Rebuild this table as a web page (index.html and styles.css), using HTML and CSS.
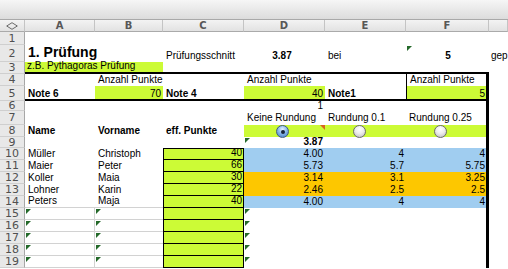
FILE: index.html
```html
<!DOCTYPE html>
<html>
<head>
<meta charset="utf-8">
<title>Prüfung</title>
<link rel="stylesheet" href="styles.css">
</head>
<body>
<div class="toolbar"></div>
<div class="sheet">
  <div class="corner"><svg width="12" height="8" viewBox="0 0 12 8"><polygon points="6,0.7 11.3,4 6,7.3 0.7,4" fill="none" stroke="#6a6a6a" stroke-width="1"/></svg></div>
  <div class="ch">A</div><div class="ch">B</div><div class="ch">C</div><div class="ch">D</div><div class="ch">E</div><div class="ch">F</div><div class="ch"></div>

  <div class="rh">1</div><div class="c"></div><div class="c"></div><div class="c"></div><div class="c"></div><div class="c"></div><div class="c"></div><div class="c"></div>

  <div class="rh">2</div>
  <div class="c span2 big">1. Prüfung</div>
  <div class="c">Prüfungsschnitt</div>
  <div class="c b m d2">3.87</div>
  <div class="c">bei</div>
  <div class="c b m gt">5</div>
  <div class="c g-col">gep</div>

  <div class="rh">3</div>
  <div class="c span2 g tb z">z.B. Pythagoras Prüfung</div>
  <div class="c tb"></div><div class="c tb"></div><div class="c tb"></div><div class="c tb"></div><div class="c"></div>

  <div class="rh">4</div>
  <div class="c"></div>
  <div class="c">Anzahl Punkte</div>
  <div class="c"></div>
  <div class="c">Anzahl Punkte</div>
  <div class="c"></div>
  <div class="c fl fr">Anzahl Punkte</div>
  <div class="c"></div>

  <div class="rh">5</div>
  <div class="c b tb p0">Note 6</div>
  <div class="c g r tb p0">70</div>
  <div class="c b tb p0">Note 4</div>
  <div class="c g r tb p0">40</div>
  <div class="c b tb p0">Note1</div>
  <div class="c g r tb fl fr p0 fpad">5</div>
  <div class="c"></div>

  <div class="rh">6</div>
  <div class="c"></div><div class="c"></div><div class="c"></div>
  <div class="c r p0">1</div>
  <div class="c"></div>
  <div class="c fr"></div>
  <div class="c"></div>

  <div class="rh">7</div>
  <div class="c"></div><div class="c"></div><div class="c"></div>
  <div class="c p2">Keine Rundung</div>
  <div class="c p2">Rundung 0.1</div>
  <div class="c fr p2">Rundung 0.25</div>
  <div class="c"></div>

  <div class="rh">8</div>
  <div class="c b">Name</div>
  <div class="c b">Vorname</div>
  <div class="c b">eff. Punkte</div>
  <div class="c g rad rad-d ct"><span class="radio on"></span></div>
  <div class="c g rad rad-e"><span class="radio"></span></div>
  <div class="c g rad rad-f fr"><span class="radio"></span></div>
  <div class="c"></div>

  <div class="rh">9</div>
  <div class="c"></div><div class="c"></div><div class="c"></div>
  <div class="c b r gt">3.87</div>
  <div class="c"></div>
  <div class="c fr"></div>
  <div class="c"></div>

  <div class="rh">10</div>
  <div class="c">Müller</div><div class="c">Christoph</div>
  <div class="c g box boxt r">40</div>
  <div class="c bl r">4.00</div><div class="c bl r">4</div><div class="c bl r fr fpad">4</div>
  <div class="c"></div>

  <div class="rh">11</div>
  <div class="c">Maier</div><div class="c">Peter</div>
  <div class="c g box r">66</div>
  <div class="c bl r">5.73</div><div class="c bl r">5.7</div><div class="c bl r fr fpad">5.75</div>
  <div class="c"></div>

  <div class="rh">12</div>
  <div class="c">Koller</div><div class="c">Maia</div>
  <div class="c g box r">30</div>
  <div class="c or r">3.14</div><div class="c or r">3.1</div><div class="c or r fr fpad">3.25</div>
  <div class="c"></div>

  <div class="rh">13</div>
  <div class="c">Lohner</div><div class="c">Karin</div>
  <div class="c g box r">22</div>
  <div class="c or r">2.46</div><div class="c or r">2.5</div><div class="c or r fr fpad">2.5</div>
  <div class="c"></div>

  <div class="rh">14</div>
  <div class="c gl">Peters</div><div class="c gl">Maja</div>
  <div class="c g box r">40</div>
  <div class="c bl r">4.00</div><div class="c bl r">4</div><div class="c bl r fr fpad">4</div>
  <div class="c"></div>

  <div class="rh">15</div>
  <div class="c gl glr gt"></div><div class="c gl gt"></div>
  <div class="c g box"></div>
  <div class="c gt"></div><div class="c"></div><div class="c fr"></div>
  <div class="c"></div>

  <div class="rh">16</div>
  <div class="c gl glr gt"></div><div class="c gl gt"></div>
  <div class="c g box"></div>
  <div class="c gt"></div><div class="c"></div><div class="c fr"></div>
  <div class="c"></div>

  <div class="rh">17</div>
  <div class="c gl glr gt"></div><div class="c gl gt"></div>
  <div class="c g box"></div>
  <div class="c gt"></div><div class="c"></div><div class="c fr"></div>
  <div class="c"></div>

  <div class="rh">18</div>
  <div class="c gl glr gt"></div><div class="c gl gt"></div>
  <div class="c g box"></div>
  <div class="c gt"></div><div class="c"></div><div class="c fr"></div>
  <div class="c"></div>

  <div class="rh">19</div>
  <div class="c gl glr gt"></div><div class="c gl gt"></div>
  <div class="c g box"></div>
  <div class="c gt"></div><div class="c"></div><div class="c fr"></div>
  <div class="c"></div>
</div>
</body>
</html>
```

FILE: styles.css
```css
* { box-sizing: border-box; margin: 0; padding: 0; }
html, body { width: 508px; height: 269px; overflow: hidden; background: #fff; }
body { font: 10px/11px "Liberation Sans", Arial, sans-serif; color: #000; }

.toolbar {
  height: 20px;
  background: linear-gradient(#f6f6f6, #dcdcdc);
  border-bottom: 1px solid #a9a9a9;
}

.sheet {
  display: grid;
  grid-template-columns: 25px 70px 68px 81px 81px 81px 83px 1fr;
  grid-template-rows: 12px 13px 17px 12px 12px 15px 10px 14px 12px 11px repeat(10, 12px);
}

.corner, .ch {
  background: linear-gradient(#f3f3f3, #e2e2e2);
  border-bottom: 1px solid #aaa;
  border-right: 1px solid #c4c4c4;
  display: flex;
  align-items: center;
  justify-content: center;
  font: bold 10px/1 "DejaVu Sans", sans-serif;
  color: #575757;
}

.rh {
  background: #e8e8e8;
  border-right: 1px solid #a7a7a7;
  border-bottom: 1px solid #cfcfcf;
  display: flex;
  align-items: center;
  justify-content: center;
  font: 11px/1 "DejaVu Sans", sans-serif;
  color: #505050;
}

.c {
  display: flex;
  align-items: flex-end;
  padding: 0 2px 1px 3px;
  white-space: nowrap;
  position: relative;
  min-width: 0;
}

.span2 { grid-column: span 2; }
.b { font-weight: bold; }
.big { font-size: 14px; line-height: 13px; font-weight: bold; padding-bottom: 3px; }
.r { justify-content: flex-end; }
.m { justify-content: center; }
.p0 { padding-bottom: 0; }
.p2 { padding-bottom: 2px; }
.z { padding-left: 2px; }
.d2 { padding-right: 8px; }
.g-col { padding-left: 2px; }

.g { background: #ccfb36; }
.bl { background: #a0cdf0; }
.or { background: #fdc700; }

.tb { border-bottom: 2px solid #000; }
.fr { border-right: 3px solid #000; }
.fl { border-left: 1px solid #000; }
.fpad { padding-right: 1px; }

.box { border-left: 1px solid #000; border-right: 1px solid #000; border-bottom: 1px solid #000; padding-right: 1px; }
.boxt { border-top: 1px solid #000; }

.gl { border-bottom: 1px solid #d2d2d2; }
.glr { border-right: 1px solid #d2d2d2; }

.gt::before {
  content: "";
  position: absolute;
  left: 1px;
  top: 1px;
  width: 0;
  height: 0;
  border-top: 5px solid #24692a;
  border-right: 5px solid transparent;
}

.ct::after {
  content: "";
  position: absolute;
  right: 0;
  top: 0;
  width: 0;
  height: 0;
  border-top: 5px solid #d8661e;
  border-left: 5px solid transparent;
}

.rad { align-items: flex-start; padding-bottom: 0; overflow: visible; }
.rad-d { padding-left: 32px; }
.rad-e { padding-left: 28px; }
.rad-f { padding-left: 28px; }

.radio {
  display: block;
  width: 13px;
  height: 13px;
  border-radius: 50%;
  border: 1px solid #6b6b6b;
  background: radial-gradient(circle at 50% 30%, #ffffff 0, #ececec 45%, #b9b9b9 100%);
  position: relative;
  z-index: 1;
}
.radio.on {
  border-color: #3f5b80;
  background: radial-gradient(circle at 50% 30%, #e6f2ff 0, #8ab9ec 45%, #3f78c4 100%);
}
.radio.on::after {
  content: "";
  position: absolute;
  left: 3.5px;
  top: 3.5px;
  width: 4px;
  height: 4px;
  border-radius: 50%;
  background: #16243a;
}
```
